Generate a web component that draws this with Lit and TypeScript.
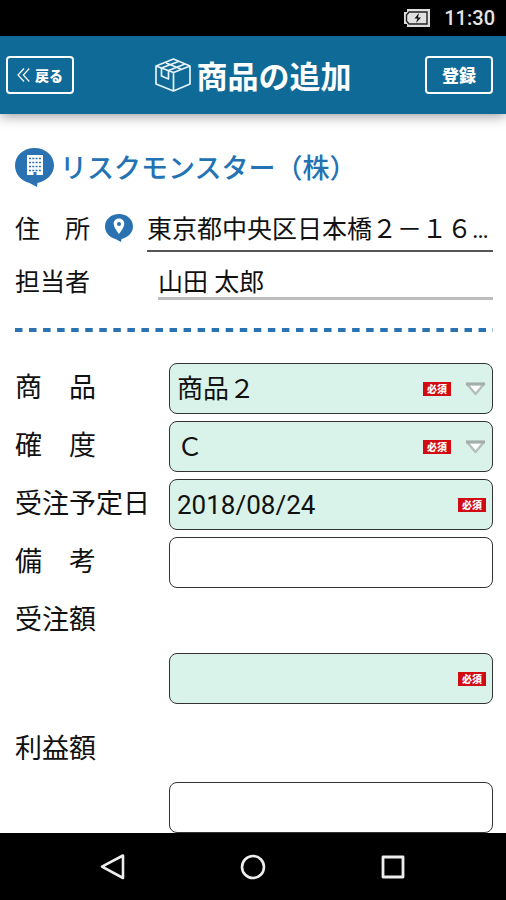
import { LitElement, html, css, nothing } from "lit";
import { customElement, property } from "lit/decorators.js";

const fieldStyles = css`
  :host {
    display: block;
    position: relative;
  }
  .control {
    appearance: none;
    display: block;
    box-sizing: border-box;
    width: 100%;
    height: 51px;
    margin: 0;
    padding: 0 7px;
    border: 1px solid #333;
    border-radius: 8px;
    background: #fff;
    color: #111;
    font: 400 26px/48px Roboto, "Noto Sans CJK JP", sans-serif;
  }
  .required {
    background: #d9f3ea;
  }
  .marks {
    position: absolute;
    inset: 0 7px 0 auto;
    display: flex;
    align-items: center;
    gap: 14px;
    pointer-events: none;
  }
  .badge {
    width: 28px;
    background: #d20a11;
    color: #fff;
    font: 900 10px/14px "Noto Sans CJK JP", sans-serif;
    text-align: center;
  }
`;

@customElement("form-field")
export class FormField extends LitElement {
  static styles = fieldStyles;

  @property() label = "";
  @property() kind: "select" | "text" = "text";
  @property() value = "";
  @property({ type: Boolean }) required = false;

  render() {
    const cls = this.required ? "control required" : "control";
    return html`
      ${this.kind === "select"
        ? html`<select class=${cls} aria-label=${this.label}>
            <option>${this.value}</option>
          </select>`
        : html`<input class=${cls} type="text" aria-label=${this.label} .value=${this.value} />`}
      ${this.required
        ? html`<div class="marks">
            <span class="badge">必須</span>
            ${this.kind === "select"
              ? html`<svg width="21" height="14" viewBox="0 0 21 14" aria-hidden="true">
                  <path d="M2 2H19L10.500 12Z" fill="#fff" stroke="#b4bfbb" stroke-width="2.400" stroke-linejoin="round" />
                  <path d="M1 2H20" stroke="#a3adaa" stroke-width="3" />
                </svg>`
              : nothing}
          </div>`
        : nothing}
    `;
  }
}

interface Field {
  label: string;
  kind: "select" | "text";
  value: string;
  required: boolean;
  stacked?: boolean;
}

const fields: Field[] = [
  { label: "商　品", kind: "select", value: "商品２", required: true },
  { label: "確　度", kind: "select", value: "Ｃ", required: true },
  { label: "受注予定日", kind: "text", value: "2018/08/24", required: true },
  { label: "備　考", kind: "text", value: "", required: false },
  { label: "受注額", kind: "text", value: "", required: true, stacked: true },
  { label: "利益額", kind: "text", value: "", required: false, stacked: true },
];

@customElement("app-root")
export class AppRoot extends LitElement {
  static styles = css`
    :host {
      display: flex;
      flex-direction: column;
      min-height: 100vh;
      background: #fff;
      color: #111;
      font-family: Roboto, "Noto Sans CJK JP", sans-serif;
    }
    svg {
      display: block;
      flex: none;
    }
    .status {
      display: flex;
      justify-content: flex-end;
      align-items: center;
      gap: 13px;
      height: 36px;
      padding-right: 11px;
      background: #000;
      color: #e4e4e4;
      font-size: 20px;
      font-weight: 500;
    }
    .header {
      display: grid;
      grid-template-columns: 1fr auto 1fr;
      align-items: center;
      height: 78px;
      padding: 0 6px;
      background: #106a98;
      box-shadow: 0 2px 12px rgba(0, 0, 0, 0.4);
      color: #fff;
    }
    .title {
      display: flex;
      align-items: center;
      gap: 6px;
      margin: 0;
      font: 700 31px/40px "Noto Sans CJK JP", sans-serif;
    }
    .action {
      display: flex;
      align-items: center;
      justify-content: center;
      gap: 5px;
      box-sizing: border-box;
      width: 68px;
      height: 38px;
      padding: 0;
      border: 2px solid #fff;
      border-radius: 4px;
      background: none;
      color: #fff;
      font: 900 14px/20px "Noto Sans CJK JP", sans-serif;
    }
    .save {
      justify-self: end;
      margin-right: 7px;
      font-size: 17px;
    }
    .main {
      flex: 1;
      padding: 32px 13px 0 15px;
    }
    .company {
      display: flex;
      align-items: center;
      gap: 6px;
      height: 42px;
      margin: 0;
      color: #2272b4;
      font: 500 27px/40px "Noto Sans CJK JP", sans-serif;
    }
    .info {
      display: flex;
      align-items: center;
      font-size: 25px;
      line-height: 34px;
    }
    .info label {
      padding-top: 4px;
    }
    .address {
      margin-top: 16px;
    }
    .person {
      margin-top: 10px;
    }
    .pin {
      margin: 0 14px 0 15px;
    }
    .person .name {
      margin-left: 68px;
    }
    .line {
      flex: 1;
      min-width: 0;
      height: 48px;
      box-sizing: border-box;
      padding: 0;
      border: 0;
      border-radius: 0;
      background: none;
      color: inherit;
      font: inherit;
      text-overflow: ellipsis;
      border-bottom: 2px solid #555;
    }
    .name {
      height: 38px;
      border-bottom: 3px solid #bdbdbd;
    }
    .rule {
      height: 4px;
      margin: 28px 0 31px;
      background: linear-gradient(90deg, #2a72b2 50%, transparent 50%) 0 0 / 14px 4px round;
    }
    .form {
      display: grid;
      grid-template-columns: 154px 1fr;
      row-gap: 7px;
    }
    .label {
      font-size: 27px;
      line-height: 51px;
      white-space: nowrap;
    }
    .stacked {
      grid-column: 1 / -1;
    }
    .field {
      grid-column: 2;
    }
    .stacked ~ .stacked {
      margin-top: 13px;
    }
    .nav {
      display: flex;
      justify-content: center;
      align-items: center;
      gap: 112px;
      height: 67px;
      background: #000;
    }
    .key {
      padding: 0;
      border: 0;
      background: none;
    }
  `;

  render() {
    return html`
      <div class="status">
        <svg width="28" height="20" viewBox="0 0 28 20" aria-label="充電中">
          <path d="M4 1H27V19H4L4 16H1V4H4Z" fill="#e0e0e0" />
          <path d="M6 4H24V16H6L3.500 13V7Z" fill="#e0e0e0" stroke="#222" stroke-width="1.400" />
          <path d="M16 5L11.500 10.500H14.500L13 15L18 9.500H15Z" fill="#111" />
        </svg>
        <span>11:30</span>
      </div>

      <header class="header">
        <button class="action">
          <svg width="13" height="14" viewBox="0 0 13 14" fill="none" stroke="#fff" stroke-width="1.200" aria-hidden="true">
            <path d="M7 .5L1 7L7 13.500M12.300 .5L6.300 7L12.300 13.500" />
          </svg>
          戻る
        </button>
        <h1 class="title">
          <svg width="36" height="34" viewBox="0 0 36 34" fill="none" stroke="#e6f3fb" stroke-width="1.700" stroke-linejoin="round" aria-hidden="true">
            <path d="M1 8L18.500 1L35 8V26L18.500 33L1 26ZM1 8L18.500 14.500L35 8M18.500 14.500V33" />
            <path d="M6.500 10L23.500 3.500M13.500 12.500L30 6M6.500 10V18L13.500 21V12.500M11 5L26 11" />
          </svg>
          <span>商品の追加</span>
        </h1>
        <button class="action save">登録</button>
      </header>

      <main class="main">
        <h2 class="company">
          <svg width="39" height="39" viewBox="0 0 39 39" aria-hidden="true">
            <path d="M19.500 0C30.500 0 39 7.500 39 17.500C39 26 32 33 22.500 35L22 39L14.500 35C6 33 0 26 0 17.500C0 7.500 8.500 0 19.500 0Z" fill="#2a72b2" />
            <path d="M12 7H28V27H12Z" fill="#fff" />
            <path d="M14 10.500H26M14 14.500H26M14 18.500H26M14 22.500H26" stroke="#2a72b2" stroke-width="1.500" stroke-dasharray="2 1.300" />
            <path d="M18.500 24H21.500V27H18.500Z" fill="#2a72b2" />
          </svg>
          <span>リスクモンスター（株）</span>
        </h2>

        <div class="info address">
          <label for="address">住　所</label>
          <svg class="pin" width="28" height="28" viewBox="0 0 28 28" aria-hidden="true">
            <path d="M14 0C22 0 28 5.500 28 12.500C28 18.500 23 23.500 16.500 25L16 28L10.500 25C4.500 23.500 0 18.500 0 12.500C0 5.500 6 0 14 0Z" fill="#2a72b2" />
            <path fill-rule="evenodd" d="M14 4.500C17.200 4.500 19.300 6.800 19.300 9.700C19.300 13.500 14 20 14 20S8.700 13.500 8.700 9.700C8.700 6.800 10.800 4.500 14 4.500ZM14 8A2 2 0 1 0 14 12A2 2 0 1 0 14 8Z" fill="#fff" />
          </svg>
          <input class="line" id="address" type="text" readonly value="東京都中央区日本橋２－１６…" />
        </div>

        <div class="info person">
          <label for="person">担当者</label>
          <input class="line name" id="person" type="text" readonly value="山田 太郎" />
        </div>

        <div class="rule"></div>

        <div class="form">
          ${fields.map(
            (f) => html`
              <div class=${f.stacked ? "label stacked" : "label"}>${f.label}</div>
              <form-field
                class="field"
                .label=${f.label}
                .kind=${f.kind}
                .value=${f.value}
                ?required=${f.required}
              ></form-field>
            `
          )}
        </div>
      </main>

      <nav class="nav">
        <button class="key" aria-label="戻る">
          <svg width="28" height="28" viewBox="0 0 28 28" fill="none" stroke="#eee" stroke-width="2.600" stroke-linejoin="round">
            <path d="M24 2.500V25L3 13.700Z" />
          </svg>
        </button>
        <button class="key" aria-label="ホーム">
          <svg width="28" height="28" viewBox="0 0 28 28" fill="none" stroke="#eee" stroke-width="2.600">
            <circle cx="14" cy="14" r="11" />
          </svg>
        </button>
        <button class="key" aria-label="アプリ一覧">
          <svg width="28" height="28" viewBox="0 0 28 28" fill="none" stroke="#eee" stroke-width="2.800" stroke-linejoin="round">
            <path d="M4 4H24V24H4Z" />
          </svg>
        </button>
      </nav>
    `;
  }
}
